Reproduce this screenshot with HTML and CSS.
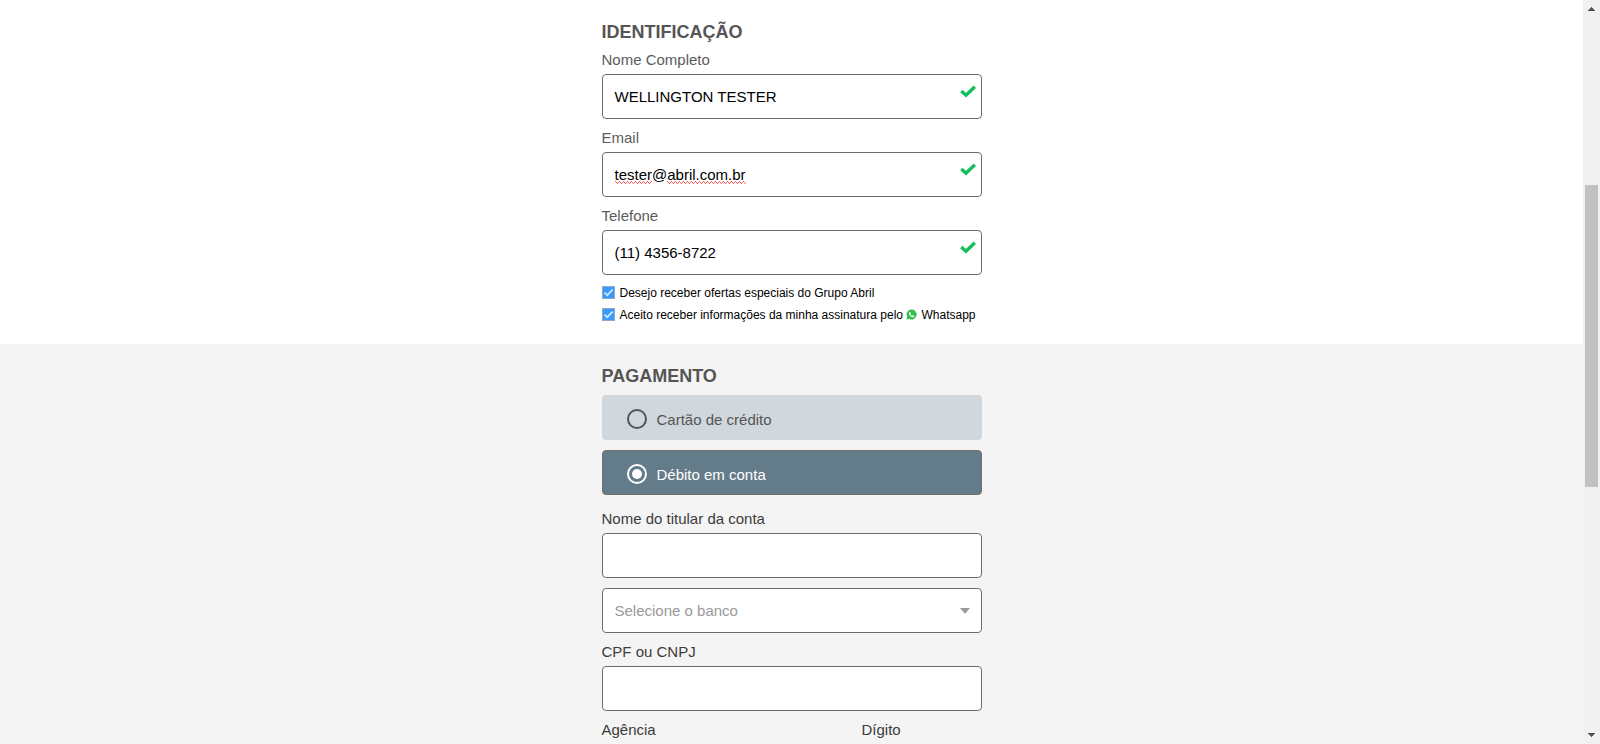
FILE: index.html
```html
<!DOCTYPE html>
<html lang="pt-BR">
<head>
<meta charset="utf-8">
<title>Assinatura</title>
<link rel="stylesheet" href="styles.css">
</head>
<body>
<div class="window">
  <main class="page">
    <section class="section section-id">
      <div class="column">
        <h2 class="title">IDENTIFICAÇÃO</h2>
        <div class="field">
          <div class="label">Nome Completo</div>
          <div class="input"><span>WELLINGTON TESTER</span><svg class="ok" viewBox="0 0 16 14"><path d="M1.300 6.900 6 11.200 14.800 2.700"/></svg></div>
        </div>
        <div class="field">
          <div class="label">Email</div>
          <div class="input"><span class="misspelled">tester</span><span>@</span><span class="misspelled">abril.com.br</span><svg class="ok" viewBox="0 0 16 14"><path d="M1.300 6.900 6 11.200 14.800 2.700"/></svg></div>
        </div>
        <div class="field">
          <div class="label">Telefone</div>
          <div class="input"><span>(11) 4356-8722</span><svg class="ok" viewBox="0 0 16 14"><path d="M1.300 6.900 6 11.200 14.800 2.700"/></svg></div>
        </div>
        <div class="checks">
          <div class="check"><svg class="box" viewBox="0 0 13 13"><rect x=".5" y=".5" width="12" height="12"/><path d="M2.500 6.600 5.300 9.200 10.600 3.600"/></svg><span>Desejo receber ofertas especiais do Grupo Abril</span></div>
          <div class="check"><svg class="box" viewBox="0 0 13 13"><rect x=".5" y=".5" width="12" height="12"/><path d="M2.500 6.600 5.300 9.200 10.600 3.600"/></svg><span>Aceito receber informações da minha assinatura pelo</span><svg class="whats" viewBox="0 0 24 24"><path class="bubble" d="M1 23 2.600 17.200A11 11 0 1 1 7 21.600Z"/><path class="phone" d="M8.400 6.300c-.5 0-1.900 1-1.900 2.700 0 4 5 8.800 8.800 8.800 1.600 0 2.700-1.300 2.700-2.500 0-.6-2.500-1.800-3-1.800s-1 1.400-1.500 1.400c-1 0-3.900-2.700-3.900-3.600 0-.5 1-.9 1-1.600 0-.6-1.100-3.400-2.200-3.400Z"/></svg><span>Whatsapp</span></div>
        </div>
      </div>
    </section>
    <section class="section section-pay">
      <div class="column">
        <h2 class="title">PAGAMENTO</h2>
        <div class="option"><span class="radio"></span><span>Cartão de crédito</span></div>
        <div class="option selected"><span class="radio"></span><span>Débito em conta</span></div>
        <div class="field">
          <div class="label">Nome do titular da conta</div>
          <div class="input"></div>
        </div>
        <div class="input select"><span>Selecione o banco</span><svg class="caret" viewBox="0 0 10 6"><path d="M0 0h10L5 5.800Z"/></svg></div>
        <div class="field">
          <div class="label">CPF ou CNPJ</div>
          <div class="input"></div>
        </div>
        <div class="pair">
          <div class="label">Agência</div>
          <div class="label">Dígito</div>
        </div>
      </div>
    </section>
  </main>
  <aside class="scrollbar">
    <svg class="arrow" viewBox="0 0 17 17" shape-rendering="crispEdges"><path d="M8 7h1v1h1v1h1v1h1v1H5v-1h1V9h1V8h1Z"/></svg>
    <div class="track"><div class="thumb"></div></div>
    <svg class="arrow" viewBox="0 0 17 17" shape-rendering="crispEdges"><path d="M5 6h7v1h-1v1h-1v1H9v1H8V9H7V8H6V7H5Z"/></svg>
  </aside>
</div>
</body>
</html>
```
FILE: styles.css
```css
* { box-sizing: border-box; }
body {
  margin: 0;
  overflow: hidden;
  background: #fff;
  font: 15px/20px "Liberation Sans", Arial, sans-serif;
  color: #000;
}
.window { display: flex; height: 744px; }
.page { flex: 1; display: flex; flex-direction: column; overflow: hidden; }
.section { padding-left: 601.5px; }
.section-id { flex: none; height: 344px; padding-top: 20px; }
.section-pay { flex: 1; padding-top: 20px; background: #f4f4f4; }
.column { width: 380px; }
.title {
  margin: 0;
  height: 31px;
  font-size: 18px;
  line-height: 24px;
  font-weight: bold;
  color: #555;
}
.label { height: 23px; line-height: 18px; color: #5c5c5c; }
.section-pay .label { height: 24px; line-height: 20px; color: #3c3c3c; }
.input {
  display: flex;
  align-items: center;
  height: 45px;
  padding: 1px 5px 0 12px;
  border: 1px solid #6b6b6b;
  border-radius: 4px;
  background: #fff;
}
.field { margin-bottom: 10px; }
/* three pixel rows that form a fine zigzag */
.misspelled {
  background:
    linear-gradient(90deg, #f55 1px, transparent 1px) 0 16px / 4px 1px repeat-x,
    linear-gradient(90deg, #f55 1px, transparent 1px) 1px 17px / 2px 1px repeat-x,
    linear-gradient(90deg, #f55 1px, transparent 1px) 2px 18px / 4px 1px repeat-x;
}
.ok {
  width: 16px;
  height: 14px;
  margin: 0 0 13px auto;
  fill: none;
  stroke: #12bf5b;
  stroke-width: 3.4;
}
.checks { display: flex; flex-direction: column; margin-top: -3px; }
.check {
  display: flex;
  align-items: center;
  height: 22px;
  padding-bottom: 1px;
  font-size: 12px;
  line-height: 16px;
  white-space: nowrap;
}
.box { width: 13px; height: 13px; margin-right: 5px; }
.box rect { fill: #3b99fc; stroke: #8fa9c6; }
.box path { fill: none; stroke: #cfe6ff; stroke-width: 1.8; }
.whats { width: 11px; height: 11px; margin: 0 4.500px 0 3px; }
.bubble { fill: #35bf52; }
.phone { fill: #fff; }
.option {
  display: flex;
  align-items: center;
  height: 45px;
  margin-bottom: 10px;
  padding: 4px 0 0 25px;
  border-radius: 4px;
  background: #d0d7dd;
  color: #555;
}
.option.selected {
  margin-bottom: 14px;
  padding-left: 24px;
  padding-top: 4px;
  border: 1px solid #706f70;
  background: #647c89;
  color: #fff;
}
.radio {
  flex: none;
  display: grid;
  place-items: center;
  width: 20px;
  height: 20px;
  margin: 0 10px 2px 0;
  border: 2px solid currentColor;
  border-radius: 50%;
}
.selected .radio::after {
  content: "";
  width: 10px;
  height: 10px;
  border-radius: 50%;
  background: #fff;
}
.section-pay .field { margin-bottom: 9px; }
.select {
  justify-content: space-between;
  margin: 10px 0 9px;
  padding-right: 10.500px;
  color: #999;
}
.section-pay .field:has(+ .select) { margin-bottom: 0; }
.caret { width: 10px; height: 6px; margin-bottom: 1px; fill: #999; }
.pair { display: grid; grid-template-columns: 260px 1fr; }
.scrollbar {
  display: flex;
  flex-direction: column;
  width: 17px;
  background: #f1f1f1;
}
.arrow { width: 17px; height: 17px; fill: #505050; }
.track { flex: 1; padding: 168px 2px 0; }
.thumb { height: 302px; background: #c1c1c1; }
```
